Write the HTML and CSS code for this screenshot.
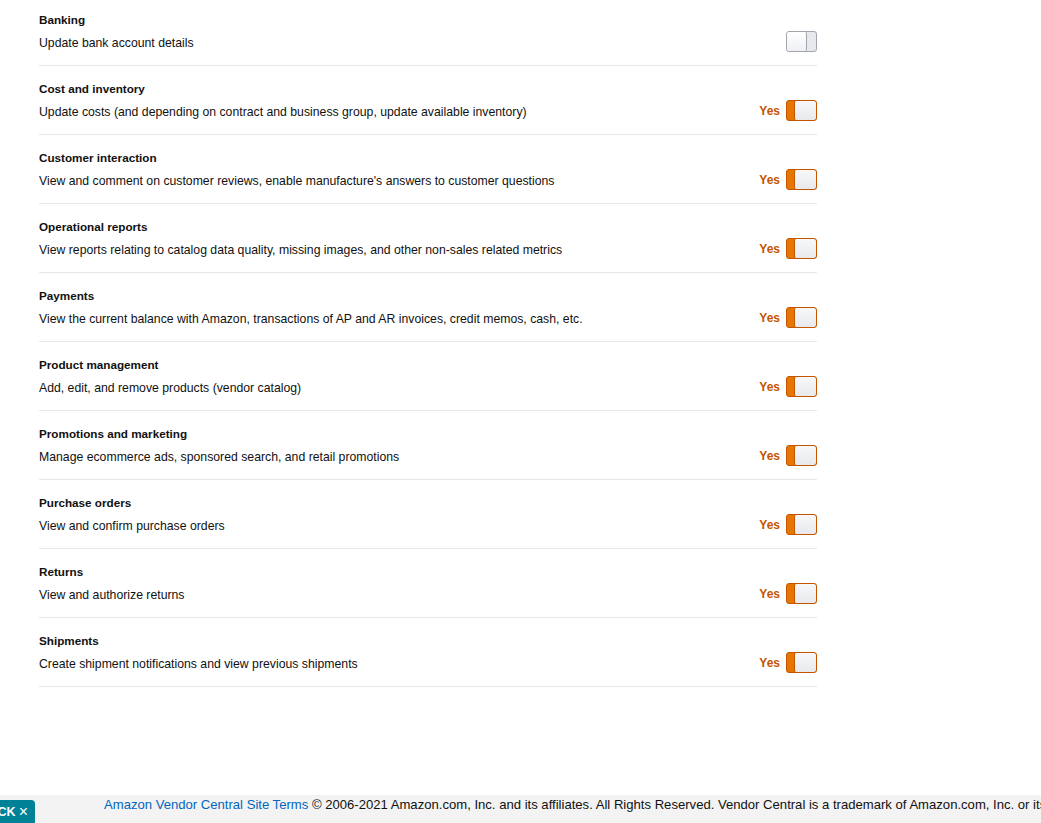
FILE: index.html
```html
<!DOCTYPE html>
<html>
<head>
<meta charset="utf-8">
<link rel="stylesheet" href="styles.css">
</head>
<body>
<main class="page">
  <ul class="perm-list">
    <li class="perm">
      <div class="perm-text"><div class="perm-title">Banking</div><div class="perm-desc">Update bank account details</div></div>
      <div class="perm-ctrl"><span class="toggle off"><span class="knob"></span></span></div>
    </li>
    <li class="perm">
      <div class="perm-text"><div class="perm-title">Cost and inventory</div><div class="perm-desc">Update costs (and depending on contract and business group, update available inventory)</div></div>
      <div class="perm-ctrl"><span class="yes">Yes</span><span class="toggle on"><span class="knob"></span></span></div>
    </li>
    <li class="perm">
      <div class="perm-text"><div class="perm-title">Customer interaction</div><div class="perm-desc">View and comment on customer reviews, enable manufacture's answers to customer questions</div></div>
      <div class="perm-ctrl"><span class="yes">Yes</span><span class="toggle on"><span class="knob"></span></span></div>
    </li>
    <li class="perm">
      <div class="perm-text"><div class="perm-title">Operational reports</div><div class="perm-desc">View reports relating to catalog data quality, missing images, and other non-sales related metrics</div></div>
      <div class="perm-ctrl"><span class="yes">Yes</span><span class="toggle on"><span class="knob"></span></span></div>
    </li>
    <li class="perm">
      <div class="perm-text"><div class="perm-title">Payments</div><div class="perm-desc">View the current balance with Amazon, transactions of AP and AR invoices, credit memos, cash, etc.</div></div>
      <div class="perm-ctrl"><span class="yes">Yes</span><span class="toggle on"><span class="knob"></span></span></div>
    </li>
    <li class="perm">
      <div class="perm-text"><div class="perm-title">Product management</div><div class="perm-desc">Add, edit, and remove products (vendor catalog)</div></div>
      <div class="perm-ctrl"><span class="yes">Yes</span><span class="toggle on"><span class="knob"></span></span></div>
    </li>
    <li class="perm">
      <div class="perm-text"><div class="perm-title">Promotions and marketing</div><div class="perm-desc">Manage ecommerce ads, sponsored search, and retail promotions</div></div>
      <div class="perm-ctrl"><span class="yes">Yes</span><span class="toggle on"><span class="knob"></span></span></div>
    </li>
    <li class="perm">
      <div class="perm-text"><div class="perm-title">Purchase orders</div><div class="perm-desc">View and confirm purchase orders</div></div>
      <div class="perm-ctrl"><span class="yes">Yes</span><span class="toggle on"><span class="knob"></span></span></div>
    </li>
    <li class="perm">
      <div class="perm-text"><div class="perm-title">Returns</div><div class="perm-desc">View and authorize returns</div></div>
      <div class="perm-ctrl"><span class="yes">Yes</span><span class="toggle on"><span class="knob"></span></span></div>
    </li>
    <li class="perm">
      <div class="perm-text"><div class="perm-title">Shipments</div><div class="perm-desc">Create shipment notifications and view previous shipments</div></div>
      <div class="perm-ctrl"><span class="yes">Yes</span><span class="toggle on"><span class="knob"></span></span></div>
    </li>
  </ul>
</main>
<footer class="footer">
  <p class="footer-text"><a class="footer-link" href="#">Amazon Vendor Central Site Terms</a> © 2006-2021 Amazon.com, Inc. and its affiliates. All Rights Reserved. Vendor Central is a trademark of Amazon.com, Inc. or its affiliates.</p>
</footer>
<button class="feedback">FEEDBACK <span class="fb-x">×</span></button>
</body>
</html>
```

FILE: styles.css
```css
html, body {
  margin: 0;
  padding: 0;
  background: #fff;
  overflow: hidden;
}
body {
  font-family: "Liberation Sans", Arial, sans-serif;
  color: #111;
  width: 1041px;
  height: 823px;
  position: relative;
}
.page {
  display: flow-root;
  padding: 0 0 0 39px;
  height: 795px;
}
.perm-list {
  list-style: none;
  margin: -3px 0 0 0;
  padding: 0;
  width: 778px;
}
.perm {
  display: flex;
  align-items: flex-start;
  justify-content: space-between;
  border-bottom: 1px solid #e7e7e7;
  height: 69px;
  box-sizing: border-box;
  padding-top: 15px;
}
.perm-text {
  display: flex;
  flex-direction: column;
}
.perm-title {
  font-size: 11.7px;
  font-weight: bold;
  line-height: 16px;
  margin-bottom: 7px;
}
.perm-desc {
  font-size: 12.25px;
  line-height: 16px;
}
.perm-ctrl {
  display: flex;
  align-items: center;
  gap: 6px;
  margin-top: 19px;
}
.yes {
  color: #c45500;
  font-size: 12px;
  font-weight: bold;
}
.toggle {
  width: 31px;
  height: 21px;
  box-sizing: border-box;
  border-radius: 3px;
  display: flex;
  overflow: hidden;
}
.toggle.on {
  border: 1px solid #c45500;
  background: #e77600;
  justify-content: flex-end;
}
.toggle.on .knob {
  width: 22px;
  height: 19px;
  box-sizing: border-box;
  background: linear-gradient(#f7f8fa, #e7e9ec);
  border-left: 1px solid #c45500;
  border-radius: 2px;
}
.toggle.off {
  border: 1px solid #a2a6ac;
  background: #e7e9ec;
  justify-content: flex-start;
}
.toggle.off .knob {
  width: 20px;
  height: 19px;
  box-sizing: border-box;
  background: linear-gradient(#fff, #eef0f3);
  border-right: 1px solid #a2a6ac;
  border-radius: 2px;
}
.footer {
  background: #f3f3f3;
  height: 28px;
  overflow: hidden;
  white-space: nowrap;
}
.footer-text {
  margin: 0;
  padding: 1px 0 0 104px;
  font-size: 13.1px;
  line-height: 18px;
  color: #111;
}
.footer-link {
  color: #0066c0;
  text-decoration: none;
}
.feedback {
  position: absolute;
  right: 1006px;
  bottom: 0;
  height: 23px;
  background: #008296;
  color: #fff;
  border: none;
  border-radius: 0 4px 0 0;
  font-family: "Liberation Sans", Arial, sans-serif;
  font-size: 12.5px;
  font-weight: bold;
  padding: 0 7px 0 8px;
  white-space: nowrap;
  display: flex;
  align-items: center;
  gap: 3px;
}
.fb-x {
  font-weight: normal;
  font-size: 16px;
  line-height: 1;
}
```
